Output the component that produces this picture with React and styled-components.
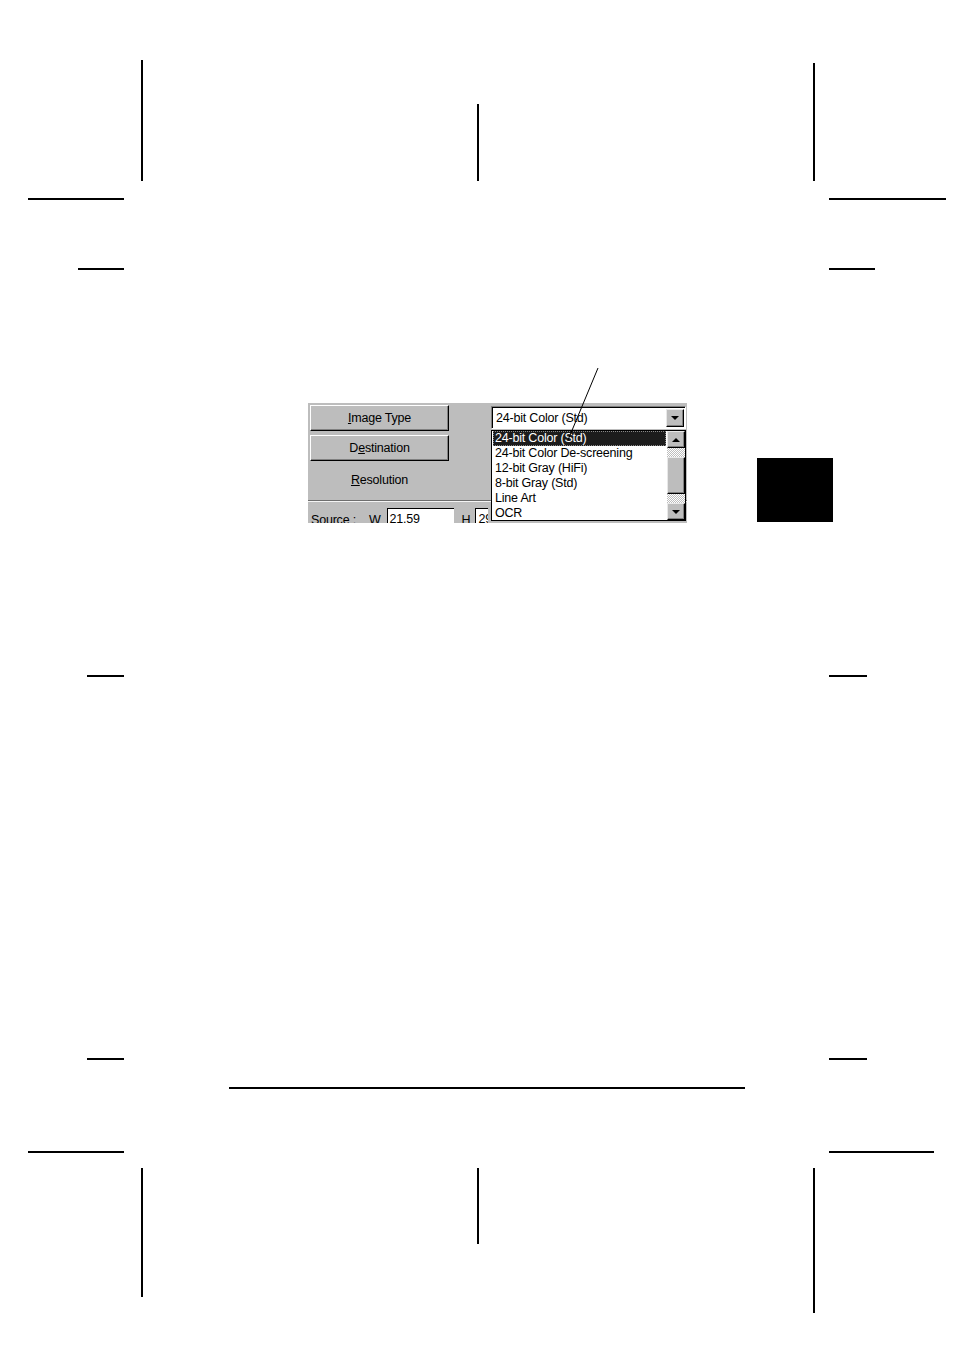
import styled, { createGlobalStyle } from 'styled-components';

const Global = createGlobalStyle`
  html, body {
    margin: 0;
    padding: 0;
    background: #fff;
  }
`;

const marks = [
  // vertical marks: x, y, length
  { v: true, x: 141, y: 60, l: 121 },
  { v: true, x: 477, y: 104, l: 77 },
  { v: true, x: 813, y: 63, l: 118 },
  { v: true, x: 141, y: 1168, l: 129 },
  { v: true, x: 477, y: 1168, l: 76 },
  { v: true, x: 813, y: 1168, l: 145 },
  // horizontal marks
  { x: 28, y: 198, l: 96 },
  { x: 829, y: 198, l: 117 },
  { x: 78, y: 268, l: 46 },
  { x: 829, y: 268, l: 46 },
  { x: 87, y: 675, l: 37 },
  { x: 829, y: 675, l: 38 },
  { x: 87, y: 1058, l: 37 },
  { x: 829, y: 1058, l: 38 },
  { x: 229, y: 1087, l: 516 },
  { x: 28, y: 1151, l: 96 },
  { x: 829, y: 1151, l: 105 },
];

const items = [
  '24-bit Color (Std)',
  '24-bit Color De-screening',
  '12-bit Gray (HiFi)',
  '8-bit Gray (Std)',
  'Line Art',
  'OCR',
];

const App = () => {
  return (
    <Page>
      <Global />
      {marks.map((m, i) => (
        <Mark
          key={i}
          $v={m.v}
          style={{ left: m.x, top: m.y, [m.v ? 'height' : 'width']: m.l }}
        />
      ))}
      <Tab />
      <Figure>
        <Pointer width="40" height="80" viewBox="0 0 40 80">
          <line x1="31" y1="0" x2="1" y2="72" stroke="#000" strokeWidth="1" />
        </Pointer>
        <Panel>
          <TopArea>
            <LeftCol>
              <Button>
                <u>I</u>mage Type
              </Button>
              <Button>
                D<u>e</u>stination
              </Button>
              <Label>
                <u>R</u>esolution
              </Label>
            </LeftCol>
            <RightCol>
              <Combo>
                <ComboText>24-bit Color (Std)</ComboText>
                <ArrowBtn>
                  <Tri />
                </ArrowBtn>
              </Combo>
            </RightCol>
          </TopArea>
          <Separator />
          <SourceRow>
            <Caption $mr={13}>Source :</Caption>
            <Caption $mr={6}>W</Caption>
            <Field $w={67}>21.59</Field>
            <Caption $ml={8} $mr={5}>H</Caption>
            <Field $w={13}>29.70</Field>
          </SourceRow>
          <DropList>
            <Items>
              {items.map((t, i) => (
                <Item key={t} $active={i === 0}>
                  {t}
                </Item>
              ))}
            </Items>
            <ScrollBar>
              <ArrowBtn $sq>
                <Tri $up />
              </ArrowBtn>
              <Dither $h={9} />
              <Thumb />
              <Dither $h={9} />
              <ArrowBtn $sq>
                <Tri />
              </ArrowBtn>
            </ScrollBar>
          </DropList>
        </Panel>
      </Figure>
    </Page>
  );
};

export default App;

const Page = styled.div`
  position: relative;
  width: 954px;
  height: 1350px;
  overflow: hidden;
  background: #fff;
  padding-top: 403px;
  box-sizing: border-box;
`;

const Mark = styled.div`
  position: absolute;
  background: #000;
  width: ${(p) => (p.$v ? '1.5px' : 'auto')};
  height: ${(p) => (p.$v ? 'auto' : '1.5px')};
`;

const Tab = styled.div`
  position: absolute;
  left: 757px;
  top: 458px;
  width: 76px;
  height: 64px;
  background: #000;
`;

const Figure = styled.div`
  position: relative;
  margin-left: 308px;
  width: 379px;
`;

const Pointer = styled.svg`
  position: absolute;
  left: 259px;
  top: -35px;
  z-index: 3;
  overflow: visible;
`;

const Panel = styled.div`
  position: relative;
  width: 379px;
  height: 120px;
  overflow: hidden;
  background: #bdbdbd;
  font-family: 'Liberation Sans', Arial, sans-serif;
  font-size: 12.5px;
  color: #000;
  letter-spacing: -0.2px;
`;

const TopArea = styled.div`
  display: flex;
  height: 97px;
`;

const LeftCol = styled.div`
  width: 182px;
  padding: 2px 0 0 2px;
  display: flex;
  flex-direction: column;
  gap: 4px;
  box-sizing: border-box;
`;

const Button = styled.div`
  width: 139px;
  height: 26px;
  box-sizing: border-box;
  display: flex;
  align-items: center;
  justify-content: center;
  background: #bdbdbd;
  border-top: 1px solid #fff;
  border-left: 1px solid #fff;
  border-right: 1px solid #000;
  border-bottom: 1px solid #000;
  box-shadow: inset -1px -1px 0 #808080;
`;

const Label = styled.div`
  width: 139px;
  height: 30px;
  display: flex;
  align-items: center;
  justify-content: center;
`;

const RightCol = styled.div`
  padding-top: 3px;
  padding-left: 1px;
`;

const Combo = styled.div`
  width: 195px;
  height: 23px;
  box-sizing: border-box;
  display: flex;
  align-items: center;
  background: #fff;
  border-top: 1px solid #808080;
  border-left: 1px solid #808080;
  border-right: 1px solid #fff;
  border-bottom: 1px solid #fff;
  box-shadow: inset 1px 1px 0 #000;
  padding: 1px 1px 0 2px;
`;

const ComboText = styled.div`
  flex: 1;
  padding-left: 2px;
`;

const ArrowBtn = styled.div`
  width: 18px;
  height: ${(p) => (p.$sq ? '17px' : '18px')};
  box-sizing: border-box;
  display: flex;
  align-items: center;
  justify-content: center;
  background: #bdbdbd;
  border-top: 1px solid #e8e8e8;
  border-left: 1px solid #e8e8e8;
  border-right: 1px solid #000;
  border-bottom: 1px solid #000;
  box-shadow: inset -1px -1px 0 #808080;
  flex-shrink: 0;
`;

const Tri = styled.div`
  width: 0;
  height: 0;
  border-left: 4px solid transparent;
  border-right: 4px solid transparent;
  ${(p) =>
    p.$up ? 'border-bottom: 4px solid #000;' : 'border-top: 4px solid #000;'}
`;

const Separator = styled.div`
  height: 0;
  border-top: 1px solid #6e6e6e;
  border-bottom: 1px solid #f4f4f4;
`;

const SourceRow = styled.div`
  display: flex;
  align-items: center;
  height: 20px;
  padding: 6px 0 0 3px;
`;

const Caption = styled.span`
  margin-left: ${(p) => p.$ml || 0}px;
  margin-right: ${(p) => p.$mr || 0}px;
  padding-top: 4px;
  white-space: nowrap;
`;

const Field = styled.div`
  width: ${(p) => p.$w}px;
  height: 20px;
  box-sizing: border-box;
  overflow: hidden;
  white-space: nowrap;
  background: #fff;
  border-top: 1px solid #000;
  border-left: 1px solid #000;
  padding: 3px 0 0 2px;
`;

const DropList = styled.div`
  position: absolute;
  left: 183px;
  top: 27px;
  width: 195px;
  height: 91px;
  box-sizing: border-box;
  border: 1px solid #000;
  background: #fff;
  display: flex;
  z-index: 2;
`;

const Items = styled.div`
  flex: 1;
  padding: 0 1px;
`;

const Item = styled.div`
  height: 15px;
  line-height: 15px;
  padding-left: 2px;
  box-sizing: border-box;
  white-space: nowrap;
  background: ${(p) => (p.$active ? '#1c1c1c' : 'transparent')};
  color: ${(p) => (p.$active ? '#fff' : '#000')};
  outline: ${(p) => (p.$active ? '1px dotted #888' : 'none')};
  outline-offset: -1px;
`;

const ScrollBar = styled.div`
  width: 18px;
  display: flex;
  flex-direction: column;
`;

const Dither = styled.div`
  height: ${(p) => p.$h}px;
  background: repeating-conic-gradient(#fff 0 25%, #bdbdbd 0 50%) 0 0 / 2px 2px;
`;

const Thumb = styled.div`
  flex: 1;
  box-sizing: border-box;
  background: #bdbdbd;
  border-top: 1px solid #e8e8e8;
  border-left: 1px solid #e8e8e8;
  border-right: 1px solid #000;
  border-bottom: 1px solid #000;
  box-shadow: inset -1px -1px 0 #808080;
`;
